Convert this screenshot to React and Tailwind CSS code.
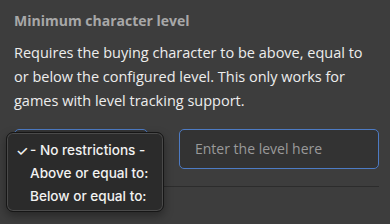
import React from "react";

export default function App() {
  return (
    <div className="w-[390px] h-[224px] bg-[#3d3d3d] overflow-hidden" style={{ fontFamily: '"Open Sans", sans-serif' }}>
      <div className="pl-[14px] pr-[11px] pt-[10.5px]">
        <h3 className="text-[14px] font-bold leading-[20px] text-[#a8a8a8]">Minimum character level</h3>
        <p className="mt-[10px] text-[14.5px] leading-[24px] text-[#ededed]">
          Requires the buying character to be above, equal to or below the configured level. This only works for games with level tracking support.
        </p>
        <div className="mt-[16px] flex gap-[31px]">
          <div className="relative w-[134px] h-[41px] rounded-[5px] border border-[#4d7bc4] bg-[#333333]">
            <div
              className="absolute left-[-9px] top-[2px] w-[158px] h-[80px] rounded-[7px] border border-[#161616] bg-[#2b2b2b] pt-[6px] shadow-[inset_0_0_0_1px_#4a4a4a,0_4px_10px_rgba(0,0,0,0.35)] text-[13.6px] font-medium text-[#f2f2f2]"
              style={{ fontFamily: 'Inter, "Liberation Sans", sans-serif' }}
            >
              <div className="h-[23px] flex items-center">
                <span className="w-[23px] pl-[9px] text-[14px]">✓</span>
                <span>- No restrictions -</span>
              </div>
              <div className="h-[23px] flex items-center pl-[23px]">Above or equal to:</div>
              <div className="h-[23px] flex items-center pl-[23px]">Below or equal to:</div>
            </div>
          </div>
          <input
            className="w-[200px] h-[40px] rounded-[5px] border border-[#4d7bc4] bg-[#333333] pl-[15px] text-[14px] text-[#ededed] placeholder:text-[#9a9a9a] outline-none"
            placeholder="Enter the level here"
          />
        </div>
        <div className="mt-[16px] h-px bg-[#2c2c2c]" />
      </div>
    </div>
  );
}
